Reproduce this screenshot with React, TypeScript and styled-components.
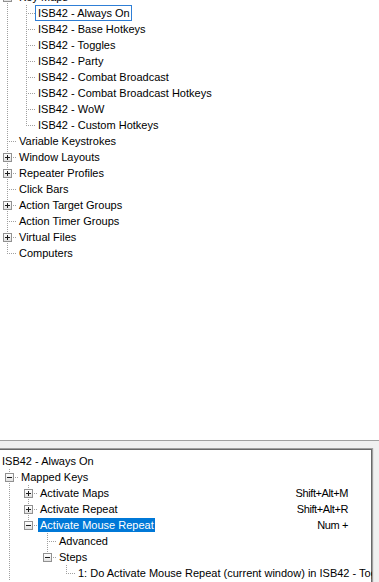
import React from 'react';
import styled, { createGlobalStyle } from 'styled-components';

type Guide = 'none' | 'pipe' | 'tee' | 'elbow';

type TreeNode = {
  label: string;
  guides: Guide[];
  toggle?: 'plus' | 'minus';
  hotkey?: string;
  state?: 'focus' | 'selected';
};

const GlobalStyle = createGlobalStyle`
  html, body {
    margin: 0;
    padding: 0;
    background: #f0f0f0;
  }
  body {
    font-family: "Liberation Sans", Arial, sans-serif;
    font-size: 11px;
    color: #000;
  }
`;

const Window = styled.div`
  width: 379px;
  height: 582px;
  display: flex;
  flex-direction: column;
  overflow: hidden;
  background: #f0f0f0;
`;

const TopPane = styled.div`
  flex: none;
  height: 440px;
  background: #fff;
  border-bottom: 1px solid #a0a0a0;
  overflow: hidden;
`;

const Splitter = styled.div`
  flex: none;
  height: 7px;
`;

const BottomArea = styled.div`
  flex: 1;
  min-height: 0;
  display: flex;
`;

const BottomPane = styled.div`
  flex: 1;
  min-width: 0;
  background: #fff;
  border-top: 1px solid #a0a0a0;
  border-right: 1px solid #a0a0a0;
  box-shadow: inset 0 1px 0 #696969, inset -1px 0 0 #696969;
  padding-top: 4px;
  overflow: hidden;
`;

const Gutter = styled.div`
  flex: none;
  width: 6px;
  border-left: 1px solid #e3e3e3;
  box-sizing: border-box;
`;

const Tree = styled.div<{ $shift: number; $offset: number }>`
  display: flex;
  flex-direction: column;
  padding-left: ${(p) => p.$shift}px;
  margin-top: ${(p) => p.$offset}px;
`;

const Row = styled.div`
  height: 16px;
  display: grid;
  grid-template-columns: minmax(0, 1fr) auto;
  align-items: center;
  white-space: nowrap;
`;

const Branch = styled.div`
  display: flex;
  align-items: center;
  height: 16px;
  min-width: 0;
`;

const dots = (dir: 'bottom' | 'right') =>
  `repeating-linear-gradient(to ${dir}, #a0a0a0 0 1px, transparent 1px 2px)`;

const Cell = styled.span<{ $kind: Guide }>`
  position: relative;
  flex: none;
  width: 19px;
  height: 16px;
  &::before {
    content: '';
    display: ${(p) => (p.$kind === 'none' ? 'none' : 'block')};
    position: absolute;
    left: 7px;
    top: 0;
    width: 1px;
    height: ${(p) => (p.$kind === 'elbow' ? '9px' : '16px')};
    background: ${dots('bottom')};
  }
  &::after {
    content: '';
    display: ${(p) => (p.$kind === 'tee' || p.$kind === 'elbow' ? 'block' : 'none')};
    position: absolute;
    left: 9px;
    top: 8px;
    width: 8px;
    height: 1px;
    background: ${dots('right')};
  }
`;

const Expander = styled.span<{ $open: boolean }>`
  position: absolute;
  z-index: 1;
  left: 3px;
  top: 4px;
  width: 9px;
  height: 9px;
  box-sizing: border-box;
  border: 1px solid #919191;
  background: linear-gradient(#ffffff, #e2e2e2);
  &::before {
    content: '';
    position: absolute;
    left: 1px;
    top: 3px;
    width: 5px;
    height: 1px;
    background: #1c1c1c;
  }
  &::after {
    content: '';
    display: ${(p) => (p.$open ? 'none' : 'block')};
    position: absolute;
    left: 3px;
    top: 1px;
    width: 1px;
    height: 5px;
    background: #1c1c1c;
  }
`;

const Label = styled.span<{ $state?: 'focus' | 'selected' }>`
  flex: none;
  margin-left: -3px;
  padding: 0 1px 0 2px;
  height: 16px;
  line-height: 14px;
  box-sizing: border-box;
  border: 1px solid ${(p) => (p.$state === 'focus' ? '#2f7fd6' : 'transparent')};
  background: ${(p) => (p.$state === 'selected' ? '#0078d7' : 'transparent')};
  background-clip: padding-box;
  color: ${(p) => (p.$state === 'selected' ? '#fff' : '#000')};
`;

const Hotkey = styled.span`
  padding-right: 24px;
  letter-spacing: -0.4px;
`;

const topNodes: TreeNode[] = [
  { label: 'Key Maps', guides: ['tee'], toggle: 'minus' },
  { label: 'ISB42 - Always On', guides: ['pipe', 'tee'], state: 'focus' },
  { label: 'ISB42 - Base Hotkeys', guides: ['pipe', 'tee'] },
  { label: 'ISB42 - Toggles', guides: ['pipe', 'tee'] },
  { label: 'ISB42 - Party', guides: ['pipe', 'tee'] },
  { label: 'ISB42 - Combat Broadcast', guides: ['pipe', 'tee'] },
  { label: 'ISB42 - Combat Broadcast Hotkeys', guides: ['pipe', 'tee'] },
  { label: 'ISB42 - WoW', guides: ['pipe', 'tee'] },
  { label: 'ISB42 - Custom Hotkeys', guides: ['pipe', 'elbow'] },
  { label: 'Variable Keystrokes', guides: ['tee'] },
  { label: 'Window Layouts', guides: ['tee'], toggle: 'plus' },
  { label: 'Repeater Profiles', guides: ['tee'], toggle: 'plus' },
  { label: 'Click Bars', guides: ['tee'] },
  { label: 'Action Target Groups', guides: ['tee'], toggle: 'plus' },
  { label: 'Action Timer Groups', guides: ['tee'] },
  { label: 'Virtual Files', guides: ['tee'], toggle: 'plus' },
  { label: 'Computers', guides: ['elbow'] },
];

const bottomNodes: TreeNode[] = [
  { label: 'ISB42 - Always On', guides: [] },
  { label: 'Mapped Keys', guides: ['tee'], toggle: 'minus' },
  { label: 'Activate Maps', guides: ['pipe', 'tee'], toggle: 'plus', hotkey: 'Shift+Alt+M' },
  { label: 'Activate Repeat', guides: ['pipe', 'tee'], toggle: 'plus', hotkey: 'Shift+Alt+R' },
  {
    label: 'Activate Mouse Repeat',
    guides: ['pipe', 'elbow'],
    toggle: 'minus',
    hotkey: 'Num +',
    state: 'selected',
  },
  { label: 'Advanced', guides: ['pipe', 'none', 'tee'] },
  { label: 'Steps', guides: ['pipe', 'none', 'elbow'], toggle: 'minus' },
  {
    label: '1: Do Activate Mouse Repeat (current window) in ISB42 - Toggles',
    guides: ['pipe', 'none', 'none', 'elbow'],
  },
];

const TreeRow: React.FC<{ node: TreeNode }> = ({ node }) => (
  <Row>
    <Branch>
      {node.guides.map((g, i) => (
        <Cell key={i} $kind={g}>
          {i === node.guides.length - 1 && node.toggle && (
            <Expander $open={node.toggle === 'minus'} />
          )}
        </Cell>
      ))}
      <Label $state={node.state}>{node.label}</Label>
    </Branch>
    {node.hotkey ? <Hotkey>{node.hotkey}</Hotkey> : <span />}
  </Row>
);

const App: React.FC = () => (
  <Window>
    <GlobalStyle />
    <TopPane>
      <Tree $shift={0} $offset={-11}>
        {topNodes.map((n) => (
          <TreeRow key={n.label} node={n} />
        ))}
      </Tree>
    </TopPane>
    <Splitter />
    <BottomArea>
      <BottomPane>
        <Tree $shift={2} $offset={0}>
          {bottomNodes.map((n, i) => (
            <TreeRow key={i} node={n} />
          ))}
        </Tree>
      </BottomPane>
      <Gutter />
    </BottomArea>
  </Window>
);

export default App;
